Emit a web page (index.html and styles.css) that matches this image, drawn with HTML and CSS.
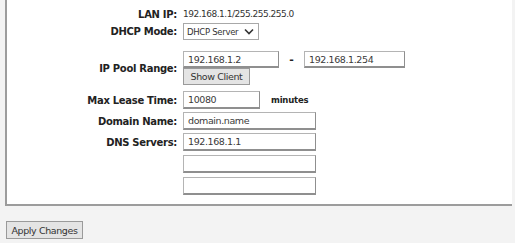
FILE: index.html
```html
<!DOCTYPE html>
<html>
<head>
<meta charset="utf-8">
<link rel="stylesheet" href="styles.css">
</head>
<body>
<div class="panel">
  <div class="form">
    <div class="lbl r-lan">LAN IP:</div>
    <div class="val r-lan"><span class="plain">192.168.1.1/255.255.255.0</span></div>

    <div class="lbl r-mode">DHCP Mode:</div>
    <div class="val r-mode">
      <div class="select"><span>DHCP Server</span>
        <svg width="10" height="7" viewBox="0 0 10 7"><path d="M1 1.5 L5 5.5 L9 1.5" fill="none" stroke="#333" stroke-width="1.6"/></svg>
      </div>
    </div>

    <div class="lbl r-pool">IP Pool Range:</div>
    <div class="val r-pool">
      <div class="pool-line">
        <div class="input w-pool">192.168.1.2</div>
        <span class="dash">-</span>
        <div class="input w-pool2">192.168.1.254</div>
      </div>
      <div class="btn show">Show Client</div>
    </div>

    <div class="lbl r-lease">Max Lease Time:</div>
    <div class="val r-lease"><div class="input w-lease">10080</div><span class="unit">minutes</span></div>

    <div class="lbl r-dom">Domain Name:</div>
    <div class="val r-dom"><div class="input w-wide">domain.name</div></div>

    <div class="lbl r-dns">DNS Servers:</div>
    <div class="val r-dns"><div class="input w-wide">192.168.1.1</div></div>

    <div class="lbl r-dns2"></div>
    <div class="val r-dns2"><div class="input w-wide"></div></div>

    <div class="lbl r-dns3"></div>
    <div class="val r-dns3"><div class="input w-wide"></div></div>
  </div>
</div>
<div class="actions">
  <div class="btn apply">Apply Changes</div>
</div>
</body>
</html>
```
FILE: styles.css
```css
html, body {
  margin: 0;
  padding: 0;
  background: #f3f3f3;
  font-family: "DejaVu Sans", Tahoma, sans-serif;
  color: #222;
}
.panel {
  box-sizing: border-box;
  margin-left: 5px;
  width: 507px;
  background: #fff;
  border-left: 2px solid #9c9c9c;
  border-bottom: 2px solid #9c9c9c;
  padding-top: 6px;
  padding-bottom: 9px;
}
.form {
  display: grid;
  grid-template-columns: 170px auto;
  column-gap: 6px;
  row-gap: 0;
}
.lbl {
  display: flex;
  align-items: center;
  justify-content: flex-end;
  font-size: 10px;
  font-weight: bold;
  letter-spacing: -0.3px;
  color: #222;
  white-space: nowrap;
}
.val {
  display: flex;
  align-items: center;
  font-size: 10px;
}
.plain {
  font-size: 9px;
  letter-spacing: -0.5px;
  color: #333;
}
.r-lan { height: 16px; }
.r-mode { height: 17px; margin-top: 1px; }
.r-pool { height: 34px; margin-top: 11px; }
.r-pool.val { flex-direction: column; align-items: flex-start; }
.r-lease { height: 18px; margin-top: 6px; }
.r-dom { height: 18px; margin-top: 3px; }
.r-dns { height: 18px; margin-top: 3px; }
.r-dns2 { height: 18px; margin-top: 4px; }
.r-dns3 { height: 18px; margin-top: 4px; }
.pool-line { display: flex; align-items: center; }
.select {
  box-sizing: border-box;
  width: 76px;
  height: 17px;
  border: 1px solid #a8a8a8;
  display: flex;
  align-items: center;
  justify-content: space-between;
  padding: 0 4px 0 3px;
  font-size: 8.5px;
  letter-spacing: -0.3px;
  color: #333;
  background: #fff;
}
.input {
  box-sizing: border-box;
  height: 18px;
  border: 1px solid #b4b4b4;
  border-right-color: #8f8f8f;
  border-bottom: 2px solid #8f8f8f;
  padding: 0 4px;
  display: flex;
  align-items: center;
  font-size: 9.5px;
  letter-spacing: -0.4px;
  color: #3a3a3a;
  background: #fff;
}
.r-pool .input { height: 17px; }
.w-pool { width: 96px; }
.w-pool2 { width: 101px; }
.w-lease { width: 77px; }
.w-wide { width: 133px; }
.dash {
  width: 25px;
  text-align: center;
  font-weight: bold;
  font-size: 11px;
}
.unit {
  margin-left: 11px;
  font-weight: bold;
  font-size: 8.5px;
  letter-spacing: -0.2px;
}
.btn {
  box-sizing: border-box;
  display: flex;
  align-items: center;
  justify-content: center;
  height: 17px;
  background: #e4e4e4;
  border: 1px solid #9a9a9a;
  font-size: 9.5px;
  letter-spacing: -0.4px;
  color: #333;
}
.show { width: 67px; }
.actions {
  display: flex;
  padding: 15px 0 0 6px;
}
.apply { width: 77px; height: 18px; }
```
